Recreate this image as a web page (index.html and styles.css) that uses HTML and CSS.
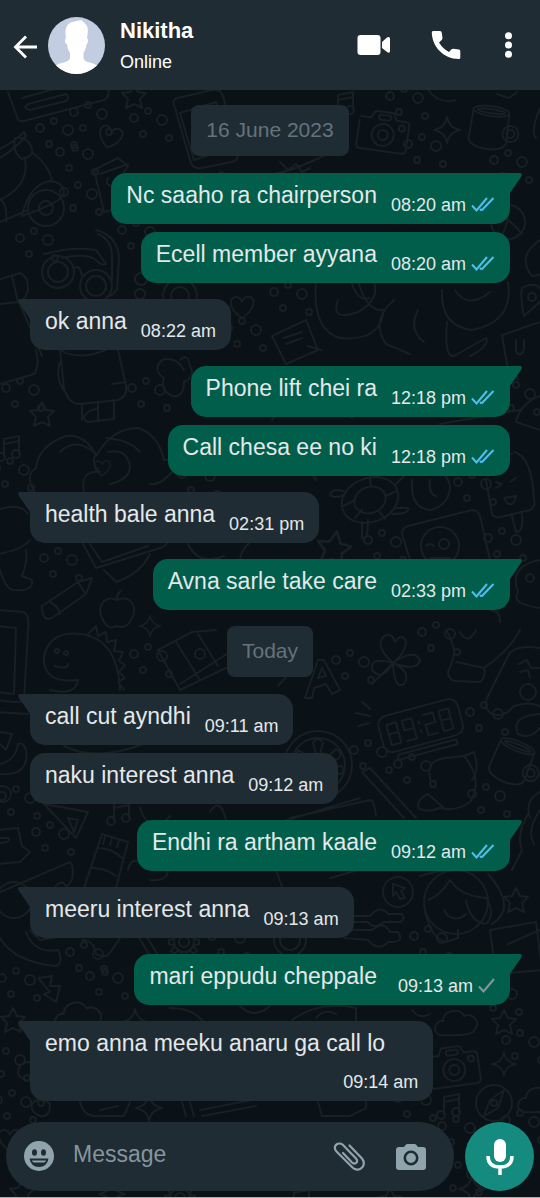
FILE: index.html
```html
<!DOCTYPE html>
<html lang="en">
<head>
<meta charset="utf-8">
<meta name="viewport" content="width=device-width, initial-scale=1">
<title>Nikitha</title>
<link rel="stylesheet" href="styles.css">
</head>
<body>
<svg class="wallpaper" viewBox="0 0 540 1198" preserveAspectRatio="xMidYMid slice" aria-hidden="true">
  <defs>
    <path id="d-star" d="M0-12L4-4L12-3L6 3L8 12L0 8L-8 12L-6 3L-12-3L-4-4Z"/>
    <path id="d-heart" d="M0 11C-16 0-12-11-5-10Q-1-9 0-5Q2-11 8-10C15-7 11 4 0 11Z"/>
    <path id="d-spark" d="M0-13Q2-2 13 0Q2 2 0 13Q-2 2-13 0Q-2-2 0-13Z"/>
    <g id="d-camera"><path d="M-24-14h10l4-7h18l4 7h9q4 0 4 4v24q0 4-4 4h-42q-4 0-4-4v-24"/><circle cy="2" r="11"/><circle cy="2" r="5"/><circle cx="18" cy="-7" r="3"/><rect x="-6" y="-18" width="12" height="5" rx="2"/></g>
    <g id="d-mug"><ellipse cy="-18" rx="18" ry="5"/><ellipse cy="-18" rx="14" ry="2"/><path d="M-18-17L-19 12Q-16 20 0 20Q16 20 19 12L18-17"/><circle cx="22" cy="2" r="8"/><circle cx="22" cy="2" r="4"/></g>
    <path id="d-cloud" d="M-17 12C-26 8-21-3-14-2C-14-13 3-16 7-7C16-11 25 0 17 7Q18 13-17 12Z"/>
    <g id="d-note"><path d="M-6 8V-9L9-12V5M-6-4L9-7"/><circle cx="-9" cy="9" r="4"/><circle cx="6" cy="6" r="4"/></g>
    <g id="d-gear"><circle r="10"/><circle r="5"/><path d="M-3-10l1-5h4l1 5M-3 10l1 5h4l1-5M-10-3l-5 1v4l5 1M10-3l5 1v4l-5 1M6-9l4-3l3 3l-3 4M-6 9l-4 3l-3-3l3-4M-6-9l-4-3l-3 3l3 4M6 9l4 3l3-3l-3-4"/></g>
    <path id="d-bolt" d="M-10-12L4-14L2-4L12-4L8 12L-4 4L2 2Z"/>
    <g id="d-fruit"><path d="M0-12C-14-18-20-4-15 6C-10 18-4 16 0 14C6 17 12 14 16 4C20-8 12-17 0-12Q-1-18 5-22"/></g>
    <g id="d-dots"><circle cx="-18" cy="-8" r="4"/><circle cx="-4" cy="-15" r="3"/><circle cx="10" cy="-6" r="5"/><circle cx="-9" cy="8" r="3"/><circle cx="17" cy="12" r="3"/></g>
  </defs>
  <g class="doodle">
    <path d="M8 92L17 117Q18 122 24 121L104 100Q112 96 106 84M22 98L58 88M28 104L66 94Q70 98 66 101L30 110Q22 108 28 104"/>
    <use href="#d-star" x="134" y="96"/><use href="#d-heart" transform="translate(110 137) rotate(15)"/>
    <path d="M-2 150Q14 142 24 132L26 136Q16 148 0 158M15 138Q12 152 22 159Q36 156 31 146Q26 136 15 138M25 159Q30 185 0 200M33 153Q48 164 52 180M22 215Q30 184 50 181Q64 182 64 194Q62 202 22 216M0 222L28 210M-2 198Q8 202 6 222"/>
    <circle cx="46" cy="208" r="18"/><circle cx="46" cy="208" r="7"/>
    <path d="M94 170L118 158L128 166L124 172M94 170L104 212L140 202M100 174L128 164M108 178q-4 8 6 8t2 10"/>
    <path d="M175 108Q170 98 182 97L212 90Q222 88 224 100L238 150Q240 160 232 162L202 168Q192 170 190 160ZM180 113L216 102L230 148L194 160Z"/>
    <use href="#d-camera" transform="translate(383 133) rotate(8)"/><use href="#d-spark" x="447" y="130"/><use href="#d-mug" transform="translate(489 129) rotate(8)"/>
    <path d="M428 90Q440 105 455 100M497 94l12 4l8-6M540 108Q530 132 536 138"/><use href="#d-note" x="344" y="104"/>
    <path d="M220 172Q260 190 335 150M280 162l8 8l8-6l6 8l8-4"/>
    <circle cx="508" cy="222" r="17"/><path d="M494 212Q512 220 522 234M505 205Q512 220 500 238M540 240Q516 256 532 276L542 274"/>
    <circle cx="58" cy="272" r="16"/><circle cx="58" cy="272" r="10"/><circle cx="96" cy="286" r="16"/><circle cx="96" cy="286" r="10"/>
    <path d="M44 254Q74 246 96 250L106 264Q102 266 98 262Q90 252 62 258M74 268q6-4 8 8M96 230Q118 236 119 258L117 290L110 296M98 234Q112 240 112 256L112 280"/>
    <circle cx="141" cy="279" r="6"/><circle cx="140" cy="294" r="5"/><circle cx="180" cy="296" r="17"/><circle cx="180" cy="296" r="9"/>
    <path d="M-2 280L20 273Q28 276 28 288Q28 298 18 302L0 304M12 276L18 302M20 304L42 356M60 350q20 12 50-2"/>
    <use href="#d-heart" transform="translate(242 307)"/>
    <path d="M316 282Q312 330 340 338Q380 342 384 310Q366 312 358 280M338 300Q330 322 358 312Q380 300 374 282M352 284q6 18 18 14M394 300Q370 320 386 344L410 354M418 310Q408 330 424 342M442 290Q440 326 472 330Q514 322 508 282M455 290Q468 310 490 292M447 322Q444 358 454 356L486 338Q490 346 470 356"/>
    <circle cx="532" cy="297" r="4"/><path d="M522 288Q540 278 544 298L524 316Q520 300 522 288M502 335L540 322M502 335L508 370M516 340v12q6 6 8-4v-8"/>
    <path d="M272 336L306 320L318 350L286 364ZM284 338l18-6M286 344l16-6M308 346l14 4"/>
    <path d="M0 384L34 374Q40 366 36 350M60 350L64 388Q68 404 80 404L118 400Q128 396 126 386L118 350M60 362Q54 380 68 396M82 404V420M114 401v18L88 422Q80 418 88 412L98 408M98 402v18M112 384l14-2"/>
    <use href="#d-star" x="42" y="414"/><path d="M184 370Q176 356 162 360Q152 370 164 378Q160 390 172 396Q184 398 184 382Q196 376 190 366Q188 352 180 360"/>
    <path d="M35 492Q24 476 36 468Q38 446 66 436Q86 434 96 456Q112 428 138 428Q158 434 164 460Q182 458 172 472Q160 486 150 484M60 452Q76 436 96 454Q90 464 100 472Q80 470 84 492M108 452Q128 448 130 468Q128 480 110 484M106 438Q130 440 140 452"/><use href="#d-heart" transform="translate(102 468) scale(.7)"/>
    <use href="#d-note" x="10" y="448"/>
    <path d="M272 420q14-20 40-8q10-16 32-2l8 8M440 424L520 410M540 396Q520 404 516 422L540 430M500 370q14-6 18 10"/>
    <ellipse cx="370" cy="500" rx="29" ry="22" transform="rotate(-20 370 500)"/><ellipse cx="370" cy="500" rx="16" ry="13" transform="rotate(-20 370 500)"/>
    <path d="M344 495q-10 4-14 0q2-8 16-3M394 508l14 0q2 6-16 6M362 522v16q6 4 6-18M396 484l10-10M370 478l1 8M355 500l-12 6M362 510l-7 8M379 511l6 8M385 496l12-5"/>
    <path d="M412 480Q410 508 430 510Q448 506 450 488Q450 476 436 470M430 480q-2 14 6 16M316 480l-10-16"/>
    <path d="M486 480L492 514Q494 518 500 517L530 510Q536 506 534 500Q532 456 514 452M488 476Q490 452 512 454M512 516l4 16q8 0 6-18M496 482l6 2l-6 4M510 482l6-4M504 498l12-2q-2 10-8 8z"/>
    <use href="#d-star" transform="translate(334 548) scale(1.4) rotate(10)"/><path d="M410 560L402 534Q402 528 408 526L472 510Q478 510 480 516L490 560"/><circle cx="440" cy="546" r="19"/><path d="M426 546q4-4 8 0M430 558h20q-4 8-18 4"/><circle cx="444" cy="544" r="5"/>
    <path d="M-2 510Q20 502 28 514M-2 554Q22 550 30 540M0 570Q6 590 14 590Q34 592 32 580L22 576Q28 560 26 550"/>
    <path d="M82 542L96 568L160 548Q172 544 164 536M90 544L102 562L148 546M104 570L116 582Q140 574 150 554M188 544q10 22 36 12M240 560q2-14 14-20"/>
    <path d="M42 606L78 582L92 578L86 594L52 618Q44 622 42 610ZM78 582L86 594M50 602q8 4 10 12"/><use href="#d-fruit" transform="translate(117 612)"/>
    <path d="M-2 610L24 612Q30 616 28 630L24 700Q20 704-2 700M-2 626l18 2l-2 66l-16-2M-2 712l30 2"/><use href="#d-spark" transform="translate(150 626) scale(.8)"/>
    <path d="M540 560Q508 566 518 592Q510 604 540 608M490 610Q500 610 500 622"/><circle cx="530" cy="578" r="4"/>
    <path d="M50 690Q76 696 78 680Q42 684 44 656Q50 630 82 634Q118 640 120 690M54 666q14 4 14-2M88 634l8-8l2 10l8-4l1 10l9-2l-2 11l9 1l-4 9l6 4l-6 7l6 6l-7 4l6 8"/><circle cx="57" cy="651" r="2"/><circle cx="66" cy="653" r="2"/>
    <path d="M158 650L192 632L216 630M158 650L180 690L226 668M176 642l24 38M198 634l20 32M230 652L180 684"/><circle cx="200" cy="654" r="5"/>
    <path d="M393 663Q374 646 384 636Q392 632 395 642Q402 632 406 642Q406 652 393 663Q414 648 420 660Q418 672 393 663Q412 672 404 684Q394 690 393 663Q382 682 372 670Q370 656 393 663L372 684"/>
    <path d="M446 630Q458 650 452 662L448 672Q448 680 456 681L480 682Q486 678 484 668L456 662M484 668Q510 650 520 630M460 632q8 14 16-2M488 696Q482 708 492 714Q504 718 514 706Q530 700 544 708M488 696L508 656Q514 644 540 648M519 664l8-4l4 8l8 0M520 672l8-2l2 8"/><circle cx="528" cy="692" r="8"/>
    <path d="M305 698L318 660H324L340 690L332 694L326 684L314 688L312 698ZM318 678l4-10l4 8zM278 686l16-18l14 6M272 640l16-12"/>
    <g transform="rotate(-15 421 727)"><rect x="380" y="707" width="82" height="37" rx="9"/><path d="M388 716h10v21h-10zM388 726h10M404 716h10v10h-10zM414 726v11h-10M420 721v2M420 730v2M426 716h10v10h-10v11h10M442 716h10v21h-10zM442 726h10M392 748h60v5h-62z"/></g>
    <path d="M362 702l8 7M356 713l14 3M358 726l12-3M540 714Q510 716 518 734Q530 740 540 728"/>
    <circle cx="318" cy="765" r="34"/><circle cx="318" cy="765" r="27"/><path d="M318 761l-5-18q5-8 10 0zM322 763l14-14q8 4 2 10zM324 768l18-2q4 8-4 8zM320 770l12 14q-6 6-10 0zM312 758l-14-8q-4 8 4 10z"/>
    <use href="#d-mug" transform="translate(511 763) rotate(22)"/><path d="M431 782Q424 760 446 758L464 756Q484 780 470 802Q456 812 440 808Q422 814 418 806Q418 798 428 794L444 808M464 756L474 752Q480 770 472 780M362 772L370 768L416 818M362 772L404 818M370 768l20 22"/>
    <path d="M0 732L12 734L6 750L0 744M0 774Q30 776 26 750Q24 742 18 744Q16 760 0 764M64 746q30 16 80-2"/><circle cx="3" cy="794" r="8"/>
    <path d="M44 804L88 812L76 838ZM68 818l6 14l4-12zM-2 830L18 828L22 846L30 852L20 862L-2 864M0 838h8q4 4-8 5"/><use href="#d-note" transform="translate(120 812)"/>
    <path d="M84 888L102 834L128 842L116 888M98 848q14 0 24 10M92 868q14 0 24 8M105 836l-2 8M112 838l-2 7M119 840l-2 7M128 870q2-12 12-8q4-14 16-6q14-4 12 10q2 16-18 14"/>
    <path d="M0 892L70 862Q74 864 72 880L66 888M54 888q8-10 12-2M140 808q10 30 30 8M210 812Q220 796 226 820M274 824L360 798M290 818L370 800Q374 800 376 816"/>
    <path d="M540 792Q524 800 530 818M528 814q-12 20-6 36l-10 20M540 810q-14 20-6 34M276 870l14 38M330 878l50-14M420 876q40-12 70-6"/>
    <circle cx="398" cy="892" r="15"/><path d="M393 884l12 4l-4 3l4 7l-5 1l-4-7l-3 4z"/><circle cx="456" cy="902" r="32"/><path d="M428 900Q440 896 450 880Q460 896 486 898M425 912Q432 940 446 942L458 938V930M486 898Q496 914 486 924Q470 922 466 900M444 910l4 6q10 6 18-2M488 874q30 34 4 50"/><use href="#d-star" x="516" y="900"/>
    <path d="M348 916h22q10-12 18-2h14q4 6-2 8h-16q-10 8-16 0h-20zM344 930h28q12-10 18 2h8q6 8-4 10h-6q-10 10-20-2l-24-2"/><circle cx="290" cy="940" r="16"/><circle cx="290" cy="940" r="10"/><path d="M490 930L536 922L542 970L496 974ZM508 944L540 930"/>
    <circle cx="14" cy="900" r="18"/><path d="M0 938Q14 962 56 966Q64 962 58 950Q34 954 26 932M30 930l10 10l14-2M82 940Q94 940 96 954Q106 960 112 950L120 938M138 936l12 20M146 936l14 22"/><use href="#d-gear" x="184" y="942"/>
    <use href="#d-bolt" transform="translate(48 990)"/><use href="#d-star" transform="translate(13 1020)"/><use href="#d-cloud" transform="translate(79 1016) scale(1.1)"/><use href="#d-spark" transform="translate(135 1022)"/>
    <path d="M170 1008Q196 1008 206 1026M240 1006q14 14 30 0M292 1020Q320 1000 356 1008V1022M316 1018q8-10 20-4M412 1010q8 10 18 4"/>
    <use href="#d-cloud" transform="translate(457 1023)"/><use href="#d-star" x="504" y="1022"/><use href="#d-camera" transform="translate(454 1068) rotate(-8)"/><use href="#d-spark" transform="translate(504 1064) scale(.9)"/>
    <circle cx="494" cy="1103" r="18"/><path d="M484 1116L490 1100L504 1090L498 1108Z"/><circle cx="494" cy="1103" r="3"/><use href="#d-note" x="450" y="1106"/><use href="#d-cloud" x="540" y="1100"/>
    <path d="M30 1062Q18 1062 18 1074Q24 1082 30 1080M32 1104Q40 1094 50 1104Q50 1118 40 1116Q30 1112 32 1104M80 1102Q84 1118 100 1116H124L130 1102M100 1110l18-4"/><circle cx="41" cy="1103" r="3"/><use href="#d-spark" x="149" y="1108"/>
    <path d="M182 1102l4 14M190 1102l4 14M200 1110L252 1100M202 1116L256 1106M318 1102l4 14h28l16-8V1100"/>
    <use href="#d-heart" x="10" y="1140"/><use href="#d-star" transform="translate(22 1192)"/><use href="#d-spark" x="112" y="1194"/><use href="#d-gear" x="180" y="1198"/><use href="#d-note" x="300" y="1197"/><use href="#d-star" x="390" y="1200"/><use href="#d-spark" x="472" y="1189"/>
    <g>
      <use href="#d-dots" x="92" y="120"/><use href="#d-dots" x="152" y="126"/><use href="#d-dots" x="58" y="136"/><use href="#d-dots" x="78" y="160"/><use href="#d-dots" x="82" y="200"/>
      <use href="#d-dots" x="408" y="104"/><use href="#d-dots" x="426" y="152"/><use href="#d-dots" x="512" y="168"/><use href="#d-dots" x="38" y="246"/>
      <use href="#d-dots" x="140" y="238"/><use href="#d-dots" x="292" y="300"/><use href="#d-dots" x="246" y="336"/><use href="#d-dots" x="24" y="396"/><use href="#d-dots" x="150" y="396"/>
      <use href="#d-dots" x="14" y="476"/><use href="#d-dots" x="200" y="482"/><use href="#d-dots" x="520" y="400"/><use href="#d-dots" x="476" y="490"/>
      <use href="#d-dots" x="62" y="566"/><use href="#d-dots" x="386" y="548"/><use href="#d-dots" x="506" y="546"/><use href="#d-dots" x="152" y="662"/><use href="#d-dots" x="354" y="668"/>
      <use href="#d-dots" x="440" y="640"/><use href="#d-dots" x="488" y="720"/><use href="#d-dots" x="372" y="758"/><use href="#d-dots" x="416" y="772"/><use href="#d-dots" x="490" y="802"/>
      <use href="#d-dots" x="20" y="804"/><use href="#d-dots" x="54" y="840"/><use href="#d-dots" x="432" y="944"/><use href="#d-dots" x="230" y="944"/>
      <use href="#d-dots" x="88" y="960"/><use href="#d-dots" x="108" y="984"/><use href="#d-dots" x="20" y="986"/><use href="#d-dots" x="10" y="1066"/><use href="#d-dots" x="502" y="1000"/>
      <use href="#d-dots" x="524" y="1048"/><use href="#d-dots" x="416" y="1106"/><use href="#d-dots" x="16" y="1108"/><use href="#d-dots" x="460" y="1134"/><use href="#d-dots" x="524" y="1128"/><use href="#d-dots" x="462" y="1180"/>
    </g>
  </g>
</svg>

<svg class="symbols" aria-hidden="true">
  <symbol id="tick-double" viewBox="0 0 24 16"><path d="M1 8.500L5.500 13.500L16 1M10.500 13.500L22.500 1M10.500 13.500L9 12"/></symbol>
  <symbol id="tick-single" viewBox="0 0 17 16"><path d="M1 8.500L5.500 13.500L16 1"/></symbol>
</svg>

<div class="app">
  <header class="topbar">
    <button class="icon-btn back" aria-label="Back"><svg width="28" height="28" viewBox="0 0 28 28"><path d="M25 16H4M14 5.500L3.500 16L14 26.500" fill="none" stroke="#fff" stroke-width="2.800"/></svg></button>
    <svg class="avatar" viewBox="0 0 57 57" role="img" aria-label="Nikitha's profile photo"><circle cx="28.500" cy="28.500" r="28.500" fill="#c3cde2"/><path d="M8 48.500C12 45 21 46 22 41V36C20 33 19.500 30 19 27.500C16.500 26 16.500 22 18 21C16 10 20 5 27 4.500C30 3 33 4 34 3C34 5 36 5 37 6.500C41 10 40 16 39 21C41 23 40 26 38.500 27.500C38 31 37 33 35.500 36V41C36 46 45 45 49 48.500Q39 57 28.500 57Q17 57 8 48.500Z" fill="#fff"/></svg>
    <div class="contact">
      <h1 class="contact-name">Nikitha</h1>
      <p class="contact-status">Online</p>
    </div>
    <nav class="actions">
      <button class="icon-btn" aria-label="Video call"><svg width="34" height="30" viewBox="0 0 34 30"><rect x="0.500" y="5" width="23" height="20" rx="3" fill="#fff"/><path d="M25 12L30 7.500Q33 6 33 9V21Q33 24 30 22L25 18Z" fill="#fff"/></svg></button>
      <button class="icon-btn" aria-label="Voice call"><svg width="30" height="30" viewBox="0 0 30 30"><path d="M2 1H9Q10.500 1 10.700 2.500L11.500 8Q11.500 9 10.700 10L8 12.500Q12 19 18 22L20.500 19.300Q21.300 18.500 22.500 18.700L28 19.500Q29.300 19.800 29.300 21V27.500Q29.300 29 28 29C12 29 1 16 0.800 2.500Q0.800 1 2 1Z" fill="#fff"/></svg></button>
      <button class="icon-btn" aria-label="More options"><svg width="14" height="30" viewBox="0 0 14 30"><g fill="#fff"><circle cx="7.500" cy="5.700" r="3.500"/><circle cx="7.500" cy="15" r="3.500"/><circle cx="7.500" cy="24.300" r="3.500"/></g></svg></button>
    </nav>
  </header>

  <main class="chat">
    <time class="day">16 June 2023</time>
    <section class="group sent">
      <article class="bubble"><p class="text">Nc saaho ra chairperson</p><span class="meta"><time>08:20 am</time><svg class="tick read"><use href="#tick-double"/></svg></span></article>
      <article class="bubble"><p class="text">Ecell member ayyana</p><span class="meta"><time>08:20 am</time><svg class="tick read"><use href="#tick-double"/></svg></span></article>
    </section>
    <section class="group received">
      <article class="bubble"><p class="text">ok anna</p><span class="meta"><time>08:22 am</time></span></article>
    </section>
    <section class="group sent">
      <article class="bubble"><p class="text">Phone lift chei ra</p><span class="meta"><time>12:18 pm</time><svg class="tick read"><use href="#tick-double"/></svg></span></article>
      <article class="bubble"><p class="text">Call chesa ee no ki</p><span class="meta"><time>12:18 pm</time><svg class="tick read"><use href="#tick-double"/></svg></span></article>
    </section>
    <section class="group received">
      <article class="bubble"><p class="text">health bale anna</p><span class="meta"><time>02:31 pm</time></span></article>
    </section>
    <section class="group sent">
      <article class="bubble"><p class="text">Avna sarle take care</p><span class="meta"><time>02:33 pm</time><svg class="tick read"><use href="#tick-double"/></svg></span></article>
    </section>
    <time class="day">Today</time>
    <section class="group received">
      <article class="bubble"><p class="text">call cut ayndhi</p><span class="meta"><time>09:11 am</time></span></article>
      <article class="bubble"><p class="text">naku interest anna</p><span class="meta"><time>09:12 am</time></span></article>
    </section>
    <section class="group sent">
      <article class="bubble"><p class="text">Endhi ra artham kaale</p><span class="meta"><time>09:12 am</time><svg class="tick read"><use href="#tick-double"/></svg></span></article>
    </section>
    <section class="group received">
      <article class="bubble"><p class="text">meeru interest anna</p><span class="meta"><time>09:13 am</time></span></article>
    </section>
    <section class="group sent">
      <article class="bubble"><p class="text">mari eppudu cheppale</p><span class="meta"><time>09:13 am</time><svg class="tick delivered"><use href="#tick-single"/></svg></span></article>
    </section>
    <section class="group received">
      <article class="bubble"><p class="text">emo anna meeku anaru ga call lo</p><span class="meta"><time>09:14 am</time></span></article>
    </section>
  </main>

  <footer class="composer">
    <div class="field">
      <button class="icon-btn" aria-label="Emoji"><svg width="30" height="30" viewBox="0 0 30 30"><circle cx="15" cy="14" r="15" fill="#90a4ae"/><g fill="#202c33"><ellipse cx="10.500" cy="10.500" rx="2.500" ry="3.200"/><ellipse cx="19.500" cy="10.500" rx="2.500" ry="3.200"/><path d="M5.500 16.500H24.500Q23 25 15 25Q7 25 5.500 16.500Z"/></g><path d="M8 18.500H22Q21.500 20.500 20 20.500H10Q8.500 20.500 8 18.500Z" fill="#90a4ae"/></svg></button>
      <input class="message" type="text" placeholder="Message" aria-label="Message">
      <button class="icon-btn" aria-label="Attach"><svg width="32" height="30" viewBox="0 0 32 30"><path d="M16.500 3.500L29 16.500C32 20 31 24 28.500 26C26 28.500 22 28 19.500 25.500L3.500 9.500C1 7 1.500 4 3.500 2.500C5.500 1 8.500 1.500 10 3L23 16.500C25 18.500 24 20.500 23 21C21.500 22 20 21.500 19 20.500L10 11" fill="none" stroke="#90a4ae" stroke-width="2.200" stroke-linecap="round"/></svg></button>
      <button class="icon-btn" aria-label="Camera"><svg width="30" height="28" viewBox="0 0 30 28"><path d="M3 4H8L10 1.500Q10.500 1 11.500 1H18.500Q19.500 1 20 1.500L22 4H27Q30 4 30 7V24Q30 27 27 27H3Q0 27 0 24V7Q0 4 3 4Z" fill="#90a4ae"/><circle cx="15" cy="15" r="6.200" fill="none" stroke="#202c33" stroke-width="2.600"/></svg></button>
    </div>
    <button class="mic" aria-label="Record voice message"><svg width="30" height="40" viewBox="0 0 30 40"><rect x="9" y="2" width="12" height="23" rx="6" fill="#fff"/><path d="M3 19Q3 30 15 30Q27 30 27 19M15 30V38" fill="none" stroke="#fff" stroke-width="3.500"/></svg></button>
  </footer>
</div>
</body>
</html>
```
FILE: styles.css
```css
* {
  box-sizing: border-box;
}

body {
  margin: 0;
  position: relative;
  background: #0a1117;
  color: #e4e8ea;
  font-family: "Liberation Sans", Arial, sans-serif;
}

h1,
p {
  margin: 0;
}

button {
  padding: 0;
  border: 0;
  background: none;
  cursor: pointer;
}

.symbols {
  display: none;
}

.wallpaper {
  position: absolute;
  inset: 0;
  z-index: -1;
  width: 100%;
  height: 100%;
}

.doodle {
  fill: none;
  stroke: #182024;
  stroke-width: 2;
  stroke-linecap: round;
  stroke-linejoin: round;
}

.app {
  display: flex;
  flex-direction: column;
  min-height: 100vh;
  border-bottom: 1px solid #a9adb0;
}

.topbar {
  display: flex;
  align-items: center;
  height: 90px;
  padding: 0 25px 0 12px;
  background: #202c33;
}

.icon-btn {
  display: flex;
  flex: none;
}

.avatar {
  width: 57px;
  height: 57px;
  margin: 0 15px 0 8px;
}

.contact {
  display: grid;
  gap: 8px;
}

.contact-name {
  color: #fff;
  font-size: 22px;
  line-height: 26px;
}

.contact-status {
  color: #fff;
  font-size: 18px;
  line-height: 20px;
}

.actions {
  display: flex;
  gap: 40px;
  margin-left: auto;
}

.chat {
  display: flex;
  flex: 1;
  flex-direction: column;
  gap: 16px;
  padding: 15px 30px 20px;
}

.day {
  align-self: center;
  margin-bottom: 1px;
  padding: 11px 15px 13px;
  border-radius: 8px;
  background: #202c33;
  color: #64737c;
  font-size: 21px;
  line-height: 27px;
}

.group {
  display: flex;
  flex-direction: column;
  gap: 8px;
  align-items: flex-start;
}

.sent {
  align-items: flex-end;
}

.bubble {
  position: relative;
  display: flex;
  flex-wrap: wrap;
  gap: 9px 14px;
  max-width: 84%;
  padding: 9px 15px;
  border-radius: 15px;
  background: #202c33;
}

.sent .bubble {
  background: #005e4b;
}

.received .bubble:first-child {
  border-top-left-radius: 0;
}

.sent .bubble:first-child {
  border-top-right-radius: 0;
}

.bubble:first-child::before {
  content: "";
  position: absolute;
  top: 0;
  right: 100%;
  width: 12px;
  height: 20px;
  background: inherit;
  clip-path: path("M12 0H2Q-1 0 1 4L12 20Z");
}

.sent .bubble:first-child::before {
  right: auto;
  left: 100%;
  clip-path: path("M0 0H10Q13 0 11 4L0 20Z");
}

.text {
  min-height: 33px;
  font-size: 23px;
  line-height: 27px;
}

.meta {
  display: flex;
  gap: 5px;
  align-items: center;
  align-self: flex-end;
  justify-content: flex-end;
  margin-left: auto;
  font-size: 18px;
  line-height: 20px;
}

.sent .meta {
  min-width: 104px;
}

.tick {
  width: 24px;
  height: 16px;
  fill: none;
  stroke-width: 2;
}

.read {
  stroke: #53bdeb;
}

.delivered {
  width: 17px;
  stroke: #8696a0;
}

.composer {
  display: flex;
  gap: 11px;
  padding: 0 6px 6px;
}

.field {
  display: flex;
  flex: 1;
  align-items: center;
  min-width: 0;
  height: 69px;
  padding: 0 28px 0 18px;
  border-radius: 35px;
  background: #202c33;
}

.field svg {
  overflow: visible;
}

.message {
  flex: 1;
  min-width: 0;
  margin: 0 16px 4px 19px;
  padding: 0;
  border: 0;
  outline: 0;
  background: none;
  color: #e4e8ea;
  font: 23px/27px "Liberation Sans", Arial, sans-serif;
}

.message::placeholder {
  color: #84969f;
  opacity: 1;
}

.message + .icon-btn {
  margin-right: 31px;
}

.mic {
  display: grid;
  flex: none;
  place-items: center;
  width: 69px;
  height: 69px;
  border-radius: 50%;
  background: #148b7e;
}
```
